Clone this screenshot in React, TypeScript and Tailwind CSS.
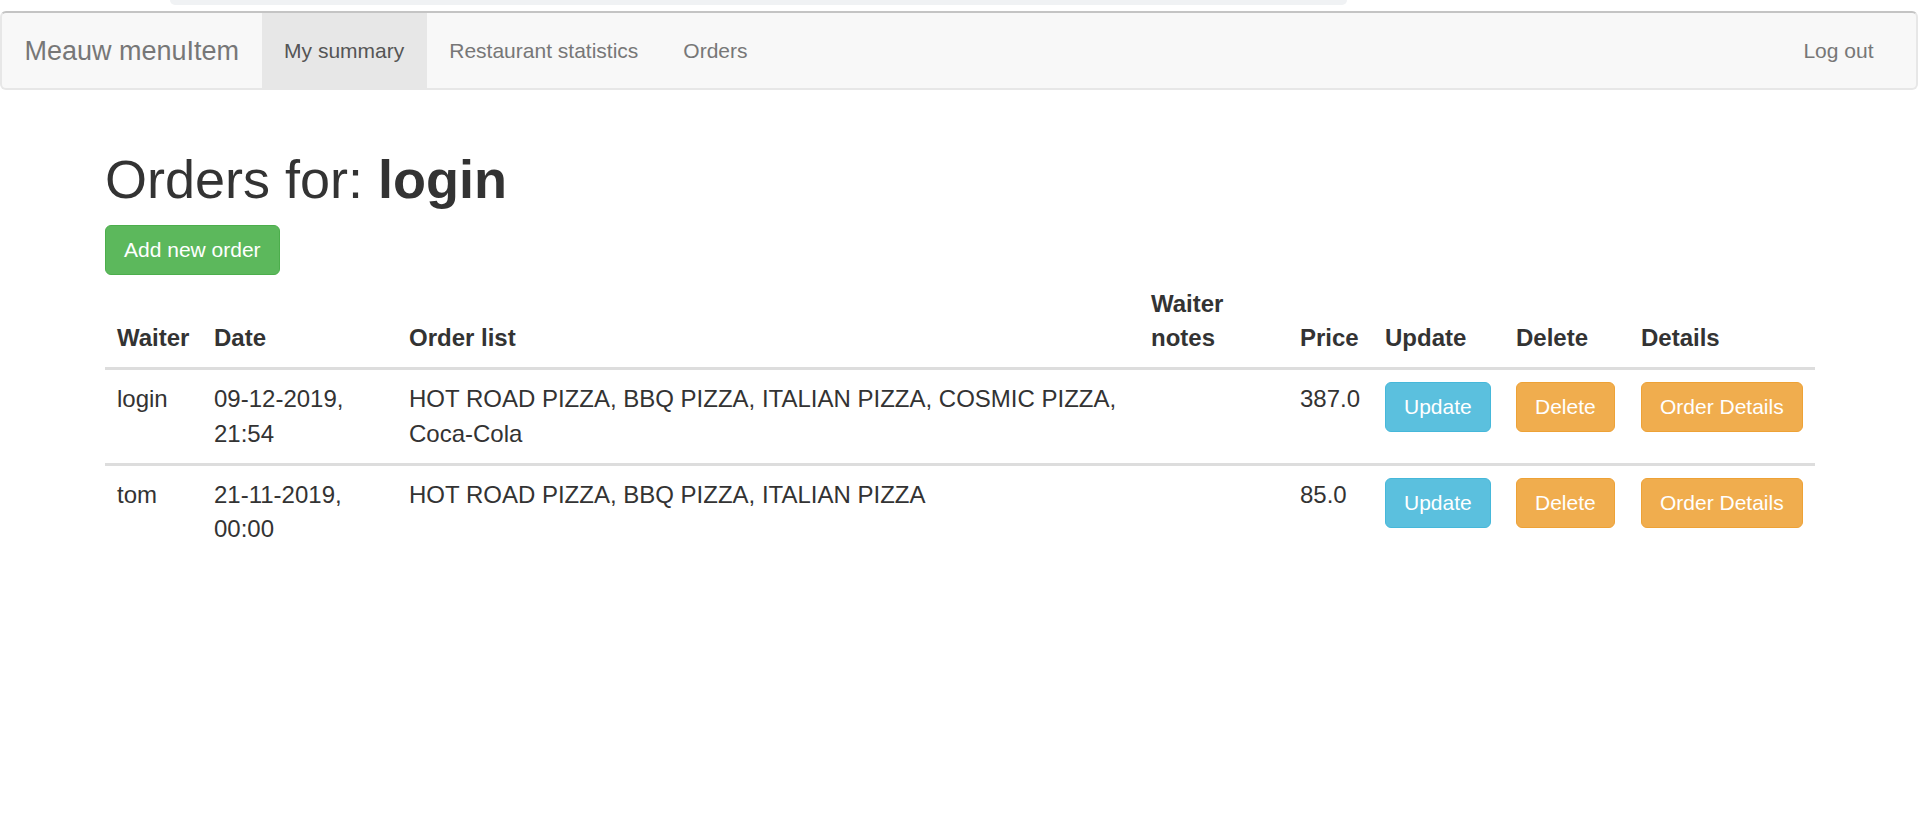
import React from "react";

interface Order {
  waiter: string;
  date: string;
  items: string;
  notes: string;
  price: string;
}

const orders: Order[] = [
  {
    waiter: "login",
    date: "09-12-2019, 21:54",
    items: "HOT ROAD PIZZA, BBQ PIZZA, ITALIAN PIZZA, COSMIC PIZZA, Coca-Cola",
    notes: "",
    price: "387.0",
  },
  {
    waiter: "tom",
    date: "21-11-2019, 00:00",
    items: "HOT ROAD PIZZA, BBQ PIZZA, ITALIAN PIZZA",
    notes: "",
    price: "85.0",
  },
];

const navLinks = [
  { label: "My summary", active: true },
  { label: "Restaurant statistics", active: false },
  { label: "Orders", active: false },
];

function Navbar() {
  return (
    <nav className="mr-[2px] flex h-[79px] items-stretch rounded-[6px] border-2 border-[#e7e7e7] border-t-[#c4c4c4] bg-[#f8f8f8] pr-[20px]">
      <a className="flex items-center px-[22.5px] text-[27px] leading-[30px] text-[#777]">Meauw menuItem</a>
      <ul className="flex">
        {navLinks.map((link) => (
          <li key={link.label} className="flex">
            <a
              className={
                link.active
                  ? "flex items-center bg-[#e7e7e7] px-[22.5px] text-[21px] leading-[30px] text-[#555]"
                  : "flex items-center px-[22.5px] text-[21px] leading-[30px] text-[#777]"
              }
            >
              {link.label}
            </a>
          </li>
        ))}
      </ul>
      <ul className="ml-auto flex">
        <li className="flex">
          <a className="flex items-center px-[22.5px] text-[21px] leading-[30px] text-[#777]">Log out</a>
        </li>
      </ul>
    </nav>
  );
}

function Btn({ kind, children }: { kind: "info" | "warning"; children: React.ReactNode }) {
  const cls =
    kind === "info"
      ? "inline-block align-top rounded-[6px] border-[1.5px] border-[#46b8da] bg-[#5bc0de] px-[18px] py-[9px] text-[21px] leading-[30px] text-white"
      : "inline-block align-top rounded-[6px] border-[1.5px] border-[#eea236] bg-[#f0ad4e] px-[18px] py-[9px] text-[21px] leading-[30px] text-white";
  return <button className={cls}>{children}</button>;
}

export default function App() {
  return (
    <div className="min-h-[818px] bg-white font-['Liberation_Sans',Arial,sans-serif] text-[#333]">
      {/* browser strip above the page */}
      <div className="h-[11px] pl-[170px]">
        <div className="h-[5px] w-[1177px] rounded-b-[14px] bg-[#f0f2f4]" />
      </div>

      <Navbar />

      <div className="mx-auto w-[1710px]">
        <h1 className="mt-[60px] text-[54px] font-medium leading-[1.1]">
          Orders for: <b className="font-bold">login</b>
        </h1>

        <button className="mt-[15.5px] rounded-[6px] border-[1.5px] border-[#4cae4c] bg-[#5cb85c] px-[18px] py-[9px] text-[21px] leading-[30px] text-white">
          Add new order
        </button>

        <table className="w-full table-fixed border-collapse text-left text-[24px] leading-[34.3px]">
          <thead>
            <tr className="border-b-[3px] border-[#ddd]">
              <th className="w-[97px] p-[12px] align-bottom font-bold">Waiter</th>
              <th className="w-[195px] p-[12px] align-bottom font-bold">Date</th>
              <th className="w-[742px] p-[12px] align-bottom font-bold">Order list</th>
              <th className="w-[149px] p-[12px] align-bottom font-bold">Waiter notes</th>
              <th className="w-[85px] p-[12px] align-bottom font-bold">Price</th>
              <th className="w-[131px] p-[12px] align-bottom font-bold">Update</th>
              <th className="w-[125px] p-[12px] align-bottom font-bold">Delete</th>
              <th className="p-[12px] align-bottom font-bold">Details</th>
            </tr>
          </thead>
          <tbody>
            {orders.map((o, i) => (
              <tr key={o.waiter} className={i > 0 ? "border-t-[3px] border-[#ddd]" : ""}>
                <td className="p-[12px] align-top">{o.waiter}</td>
                <td className="p-[12px] align-top">{o.date}</td>
                <td className="p-[12px] align-top">{o.items}</td>
                <td className="p-[12px] align-top">{o.notes}</td>
                <td className="p-[12px] align-top">{o.price}</td>
                <td className="p-[12px] align-top">
                  <Btn kind="info">Update</Btn>
                </td>
                <td className="p-[12px] align-top">
                  <Btn kind="warning">Delete</Btn>
                </td>
                <td className="p-[12px] align-top">
                  <Btn kind="warning">Order Details</Btn>
                </td>
              </tr>
            ))}
          </tbody>
        </table>
      </div>
    </div>
  );
}
